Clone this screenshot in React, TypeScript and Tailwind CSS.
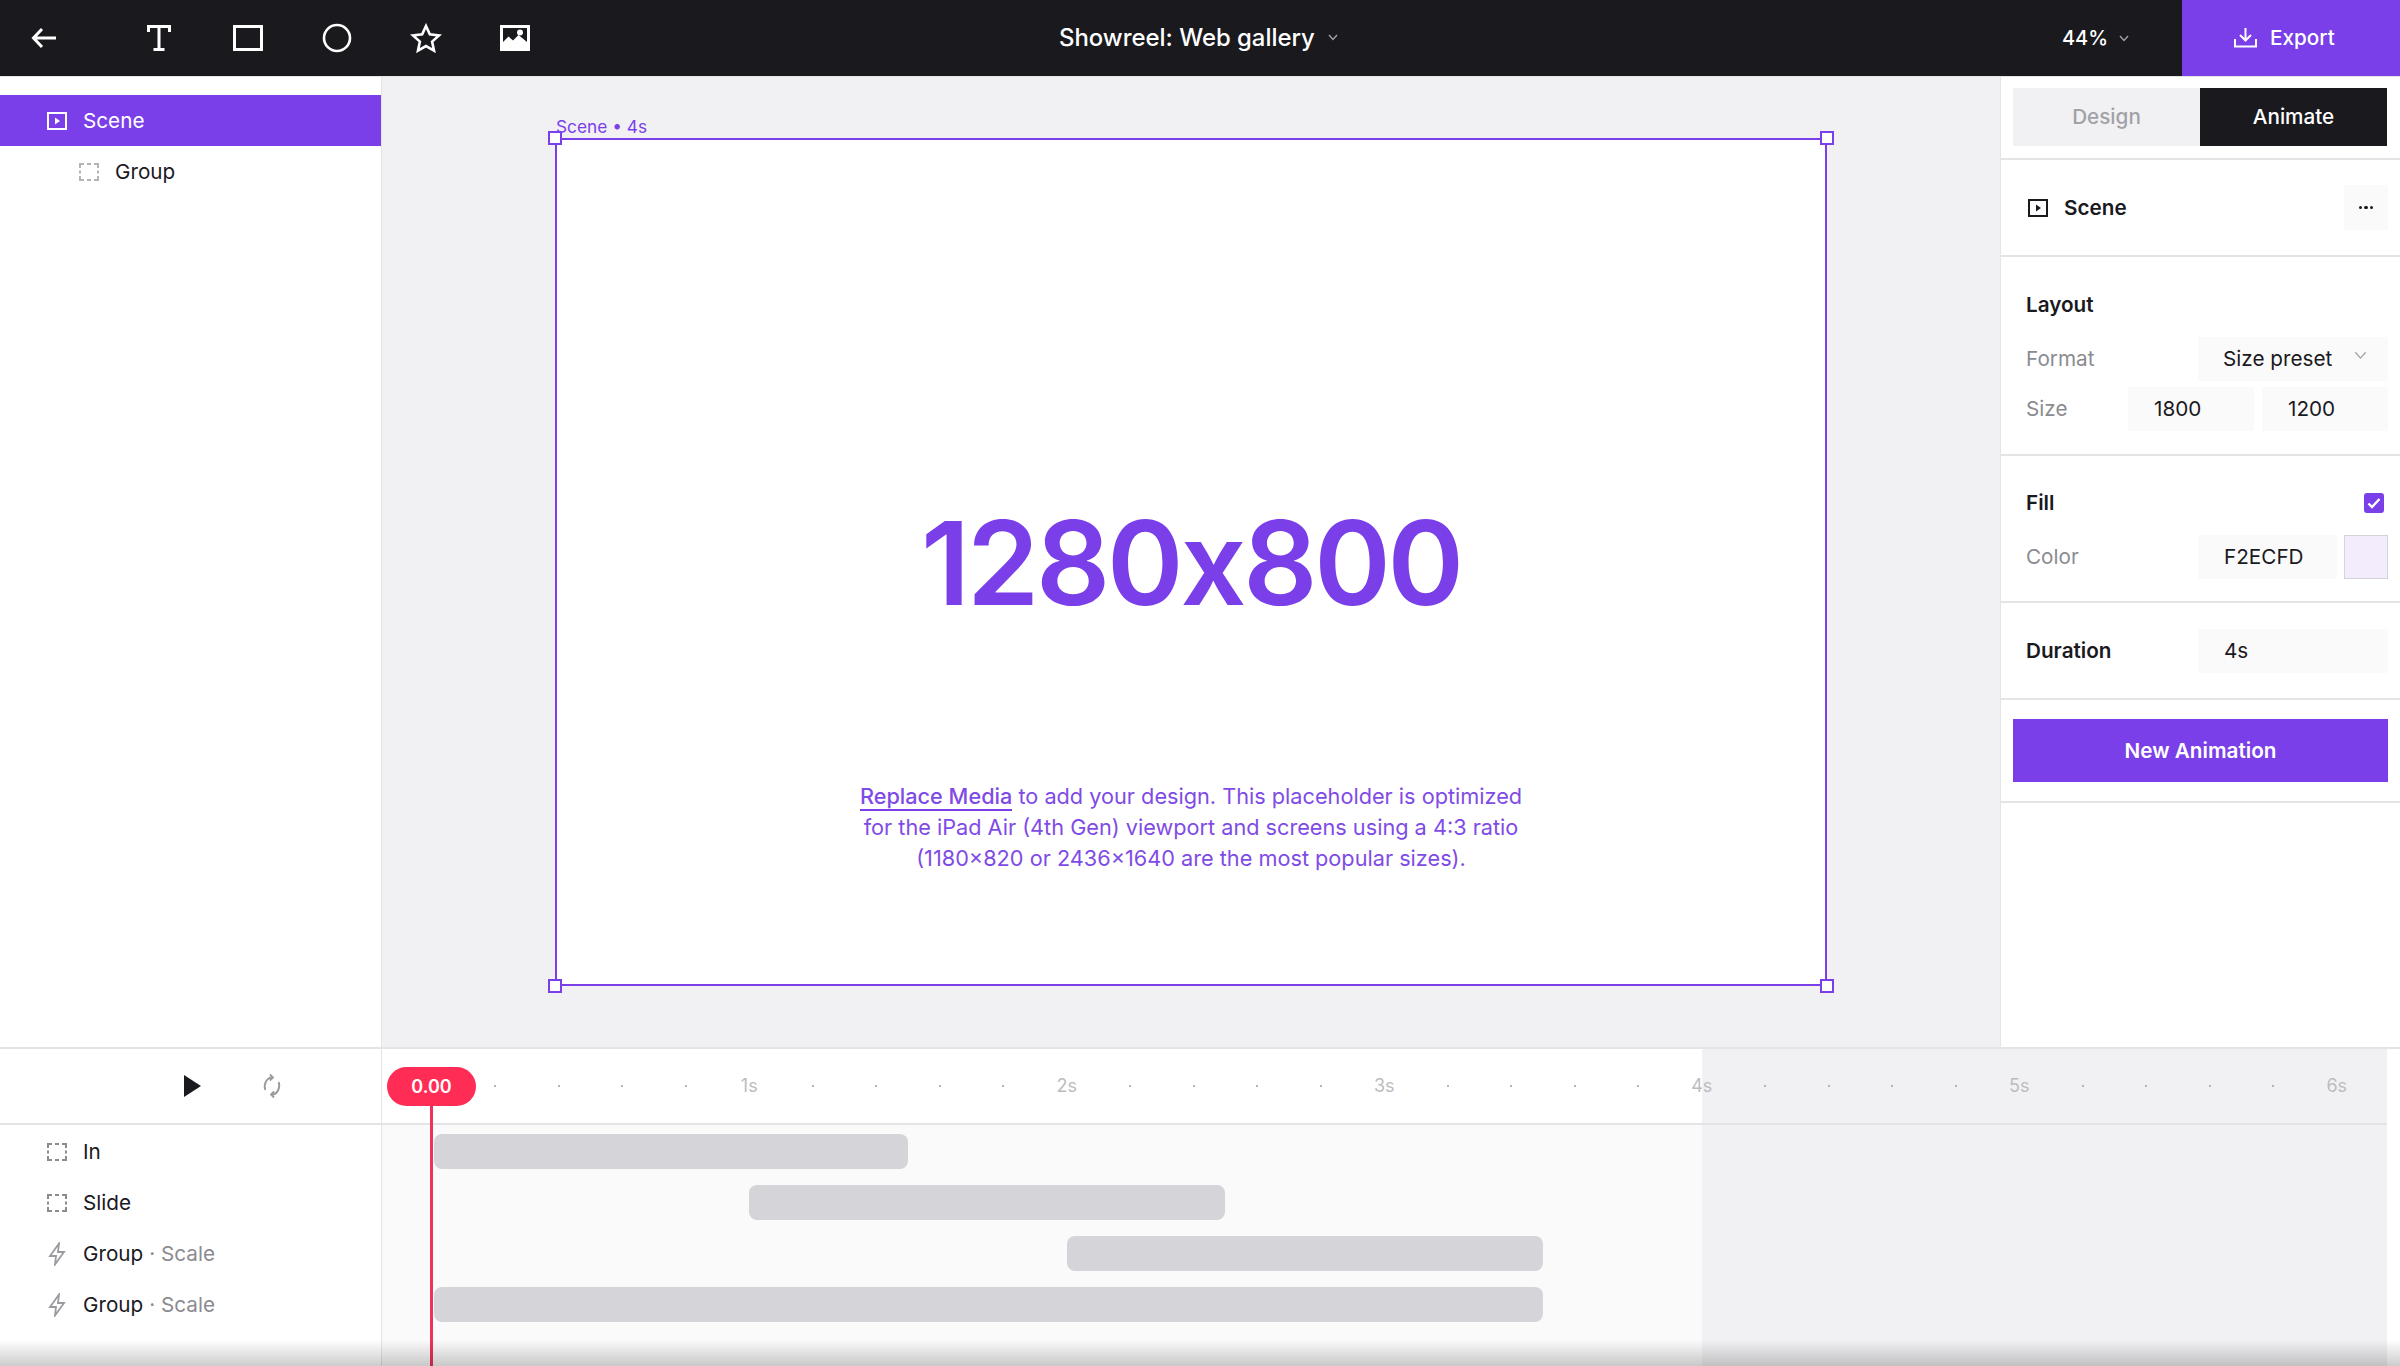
import React from "react";

function DashIcon({ color = "#8b8b90" }: { color?: string }) {
  return (
    <svg width="20" height="18" viewBox="0 0 20 18" fill="none" className="shrink-0">
      <path d="M1 5 V1 H5 M8 1 H12 M15 1 H19 V5 M19 7.5 V10.5 M19 13 V17 H15 M12 17 H8 M5 17 H1 V13 M1 10.5 V7.5" stroke={color} strokeWidth="2" />
    </svg>
  );
}

function SceneIcon({ color }: { color: string }) {
  return (
    <svg width="20" height="18" viewBox="0 0 20 18" fill="none" className="shrink-0">
      <rect x="1" y="1" width="18" height="16" stroke={color} strokeWidth="2" />
      <path d="M8 5.5 L13 9 L8 12.5 Z" fill={color} />
    </svg>
  );
}

function Bolt() {
  return (
    <svg width="18" height="24" viewBox="0 0 18 24" fill="none" className="shrink-0">
      <path d="M11 1.5 L2 14 H8 L7 22.5 L16 10 H10 Z" stroke="#9a9a9f" strokeWidth="1.8" />
    </svg>
  );
}

function Chevron({ color = "#a1a1a6", w = 10 }: { color?: string; w?: number }) {
  return (
    <svg width={w} height={w * 0.7} viewBox="0 0 10 7" fill="none" className="shrink-0">
      <path d="M1 1 L5 5.5 L9 1" stroke={color} strokeWidth={w > 10 ? 1 : 1.4} />
    </svg>
  );
}

function Input({ children, className }: { children: React.ReactNode; className: string }) {
  return <div className={"flex items-center bg-[#fafafa] text-[#1a191e] text-[20.7px] " + className}>{children}</div>;
}

function Tick() {
  return (
    <div className="w-[63.5px] shrink-0 flex justify-center">
      <span className="w-[2px] h-[2px] bg-[#b4b4b8]" />
    </div>
  );
}

function Sec({ t }: { t: string }) {
  return (
    <div className="w-[63.5px] shrink-0 flex justify-center text-[18px] text-[#bcbcc0] leading-none">{t}</div>
  );
}

function Bar({ ml, w }: { ml: string; w: string }) {
  return (
    <div className="h-[51px] flex items-center">
      <div className={"h-[35px] rounded-[8px] bg-[#d5d5d9] " + ml + " " + w} />
    </div>
  );
}

function LayerRow({ icon, name, sub }: { icon: React.ReactNode; name: string; sub?: string }) {
  return (
    <div className="h-[51px] flex items-center pl-[47px] text-[20.7px] text-[#1a191e]">
      <div className="w-[20px] flex justify-center">{icon}</div>
      <span className="ml-[16px]">{name}</span>
      {sub && <span className="text-[#8b8b90] ml-[6px]">· {sub}</span>}
    </div>
  );
}

export default function App() {
  const ruler: string[] = [];
  for (let s = 0; s <= 6; s++) {
    ruler.push(s > 0 ? s + "s" : "");
    if (s < 6) ruler.push(".", ".", ".", ".");
  }
  return (
    <div className="relative w-[2400px] h-[1366px] overflow-hidden flex flex-col bg-white text-[#1a191e] font-['Inter',sans-serif]">
      {/* Top bar */}
      <header className="h-[76px] shrink-0 bg-[#1a191e] flex items-center text-white">
        <svg width="26" height="22" viewBox="0 0 26 22" fill="none" className="ml-[31px]">
          <path d="M25 11 H3 M11 2 L2.5 11 L11 20" stroke="white" strokeWidth="3" />
        </svg>
        <svg width="24" height="26" viewBox="0 0 24 26" fill="none" className="ml-[90px]">
          <path d="M1.5 7 V1.5 H22.5 V7 M12 1.5 V24.5 M6.5 24.5 H17.5" stroke="white" strokeWidth="3" />
        </svg>
        <svg width="30" height="26" viewBox="0 0 30 26" fill="none" className="ml-[62px]">
          <rect x="1.5" y="1.5" width="27" height="23" stroke="white" strokeWidth="3" />
        </svg>
        <svg width="30" height="30" viewBox="0 0 30 30" fill="none" className="ml-[59px]">
          <circle cx="15" cy="15" r="13" stroke="white" strokeWidth="2.6" />
        </svg>
        <svg width="32" height="30" viewBox="0 0 32 30" fill="none" className="ml-[58px]">
          <path d="M16 3 L19.8 11.4 L29 12.4 L22.1 18.6 L24 27.6 L16 23 L8 27.6 L9.9 18.6 L3 12.4 L12.2 11.4 Z" stroke="white" strokeWidth="2.6" />
        </svg>
        <svg width="30" height="26" viewBox="0 0 30 26" className="ml-[58px]">
          <path fillRule="evenodd" d="M0 0 H30 V26 H0 Z M3 3 V17 L8.5 11.5 L13 15.5 L18.5 10 L27 17 V3 Z" fill="white" />
          <circle cx="20" cy="7.5" r="3" fill="white" />
        </svg>
        <div className="ml-[529px] flex items-center text-[23.9px] font-medium">
          Showreel: Web gallery
          <span className="ml-[13px]"><Chevron /></span>
        </div>
        <div className="ml-auto flex items-center text-[20px] font-medium">
          44%
          <span className="ml-[11px]"><Chevron /></span>
        </div>
        <div className="ml-[53px] w-[218px] h-full bg-[#7a3fe9] flex items-center pl-[52px] text-[20.7px] font-medium">
          <svg width="23" height="20" viewBox="0 0 23 20" fill="none">
            <path d="M11.5 0 V12 M6 7 L11.5 12.5 L17 7 M1 11 V18.5 H22 V11" stroke="white" strokeWidth="2" />
          </svg>
          <span className="ml-[13px]">Export</span>
        </div>
      </header>

      {/* Middle */}
      <div className="flex-1 flex min-h-0 border-t border-[#e4e4e7]">
        <aside className="w-[382px] shrink-0 border-r border-[#e4e4e7] pt-[18px] text-[20.7px]">
          <div className="h-[51px] flex items-center pl-[47px] bg-[#7a3fe9] text-white">
            <SceneIcon color="white" />
            <span className="ml-[16px]">Scene</span>
          </div>
          <div className="h-[51px] flex items-center pl-[79px]">
            <DashIcon color="#b4b4b8" />
            <span className="ml-[16px]">Group</span>
          </div>
        </aside>

        <main className="flex-1 bg-[#f1f1f3] pl-[173px] pt-[61px]">
          <div className="relative w-[1272px] h-[848px] bg-white border-2 border-[#7a3fe9] flex flex-col items-center">
            <span className="absolute left-[-1px] top-[-23px] text-[17.3px] leading-[20px] text-[#7a3fe9]">Scene • 4s</span>
            <span className="absolute left-[-9px] top-[-9px] w-[14px] h-[14px] bg-white border-2 border-[#7a3fe9]" />
            <span className="absolute right-[-9px] top-[-9px] w-[14px] h-[14px] bg-white border-2 border-[#7a3fe9]" />
            <span className="absolute left-[-9px] bottom-[-9px] w-[14px] h-[14px] bg-white border-2 border-[#7a3fe9]" />
            <span className="absolute right-[-9px] bottom-[-9px] w-[14px] h-[14px] bg-white border-2 border-[#7a3fe9]" />
            <div className="mt-[343px] text-[116px] leading-[160px] font-semibold tracking-[-3.2px] text-[#7a3fe9] [font-feature-settings:'calt'_0]">1280x800</div>
            <p className="mt-[138px] text-center text-[21.7px] leading-[31px] text-[#7f4be6]">
              <span className="font-medium border-b-2 border-[#7a3fe9]">Replace Media</span> to add your design. This placeholder is optimized
              <br />
              for the iPad Air (4th Gen) viewport and screens using a 4:3 ratio
              <br />
              (1180×820 or 2436×1640 are the most popular sizes).
            </p>
          </div>
        </main>

        <aside className="w-[400px] shrink-0 bg-white border-l border-[#e4e4e7] text-[20.7px]">
          <div className="h-[83px] border-b-2 border-[#e4e4e7] px-[12px] pt-[11px] flex">
            <div className="w-[187px] h-[58px] bg-[#f1f1f3] text-[#a1a1a6] flex items-center justify-center font-medium">Design</div>
            <div className="w-[187px] h-[58px] bg-[#1a191e] text-white flex items-center justify-center font-medium">Animate</div>
          </div>
          <div className="h-[97px] border-b-2 border-[#e4e4e7] pl-[27px] pr-[12px] flex items-center">
            <SceneIcon color="#1a191e" />
            <span className="ml-[16px] font-semibold">Scene</span>
            <div className="ml-auto w-[44px] h-[45px] bg-[#fafafa] flex items-center justify-center gap-[2px]">
              <span className="w-[3.5px] h-[3.5px] rounded-full bg-[#1a191e]" />
              <span className="w-[3.5px] h-[3.5px] rounded-full bg-[#1a191e]" />
              <span className="w-[3.5px] h-[3.5px] rounded-full bg-[#1a191e]" />
            </div>
          </div>
          <div className="h-[199px] border-b-2 border-[#e4e4e7] pl-[25px] pr-[12px] pt-[33px]">
            <div className="font-semibold leading-[30px]">Layout</div>
            <div className="mt-[17px] flex items-center h-[44px]">
              <span className="text-[#8b8b90]">Format</span>
              <Input className="ml-auto w-[190px] h-[44px] pl-[25px]">
                Size preset
                <span className="ml-[22px] mb-[6px]"><Chevron color="#a1a1a6" w={13} /></span>
              </Input>
            </div>
            <div className="mt-[6px] flex items-center h-[44px]">
              <span className="text-[#8b8b90]">Size</span>
              <Input className="ml-auto w-[126px] h-[44px] pl-[26px]">1800</Input>
              <Input className="ml-[8px] w-[126px] h-[44px] pl-[26px]">1200</Input>
            </div>
          </div>
          <div className="h-[147px] border-b-2 border-[#e4e4e7] pl-[25px] pr-[12px] pt-[32px]">
            <div className="flex items-center h-[30px]">
              <span className="font-semibold">Fill</span>
              <div className="ml-auto mr-[4px] w-[20px] h-[20px] rounded-[3px] bg-[#7a3fe9] flex items-center justify-center">
                <svg width="14" height="12" viewBox="0 0 14 12" fill="none">
                  <path d="M1.5 6.5 L5 10 L12.5 2" stroke="white" strokeWidth="2.4" />
                </svg>
              </div>
            </div>
            <div className="mt-[17px] flex items-center h-[44px]">
              <span className="text-[#8b8b90]">Color</span>
              <Input className="ml-auto w-[139px] h-[44px] pl-[26px]">F2ECFD</Input>
              <div className="ml-[7px] w-[44px] h-[44px] bg-[#f2ecfd] border border-[#d4d4d8]" />
            </div>
          </div>
          <div className="h-[97px] border-b-2 border-[#e4e4e7] pl-[25px] pr-[12px] flex items-center">
            <span className="font-semibold">Duration</span>
            <Input className="ml-auto w-[190px] h-[44px] pl-[26px]">4s</Input>
          </div>
          <div className="h-[103px] border-b-2 border-[#e4e4e7] px-[12px] pt-[19px]">
            <div className="h-[63px] bg-[#7a3fe9] text-white flex items-center justify-center font-semibold">New Animation</div>
          </div>
        </aside>
      </div>

      {/* Timeline */}
      <section className="h-[319px] shrink-0 flex border-t-2 border-[#e4e4e7]">
        <div className="w-[382px] shrink-0 border-r border-[#e4e4e7]">
          <div className="h-[76px] border-b-2 border-[#e4e4e7] flex items-center pl-[184px]">
            <svg width="17" height="22" viewBox="0 0 17 22"><path d="M0 0 L17 11 L0 22 Z" fill="#1a191e" /></svg>
            <svg width="20" height="24" viewBox="0 0 24 24" fill="none" stroke="#9a9a9f" strokeWidth="2.2" className="ml-[61px]" preserveAspectRatio="none">
              <path d="M4 16 A9 9 0 0 1 12 3.5 M20 8 A9 9 0 0 1 12 20.5" />
              <path d="M9.5 0.5 L13 3.5 L9.5 6.5 M14.5 17.5 L11 20.5 L14.5 23.5" />
            </svg>
          </div>
          <div className="pt-[1px]">
            <LayerRow icon={<DashIcon />} name="In" />
            <LayerRow icon={<DashIcon />} name="Slide" />
            <LayerRow icon={<Bolt />} name="Group" sub="Scale" />
            <LayerRow icon={<Bolt />} name="Group" sub="Scale" />
          </div>
        </div>
        <div className="relative flex-1 min-w-0 bg-[linear-gradient(to_right,#fafafa_1320px,#f1f1f3_1320px,#f1f1f3_2005px,#fff_2005px)]">
          <div className="h-[76px] w-[2005px] border-b-2 border-[#e4e4e7] bg-[linear-gradient(to_right,#fff_1320px,#f1f1f3_1320px)] flex items-center pl-[18px]">
            {ruler.map((r, i) => (r === "." ? <Tick key={i} /> : <Sec key={i} t={r} />))}
          </div>
          <div className="pt-[1px] pl-[52px]">
            <Bar ml="" w="w-[474px]" />
            <Bar ml="ml-[315px]" w="w-[476px]" />
            <Bar ml="ml-[633px]" w="w-[476px]" />
            <Bar ml="" w="w-[1109px]" />
          </div>
          <div className="absolute left-[5px] top-[18px] w-[89px] h-[39px] rounded-full bg-[#ff2d55] text-white text-[18px] font-semibold flex items-center justify-center">0.00</div>
          <div className="absolute left-[48px] top-[57px] bottom-0 w-[3px] bg-[#f0325a]" />
        </div>
      </section>

      <div className="absolute left-0 right-0 bottom-0 h-[26px] bg-gradient-to-b from-transparent to-[#00000033]" />
    </div>
  );
}
